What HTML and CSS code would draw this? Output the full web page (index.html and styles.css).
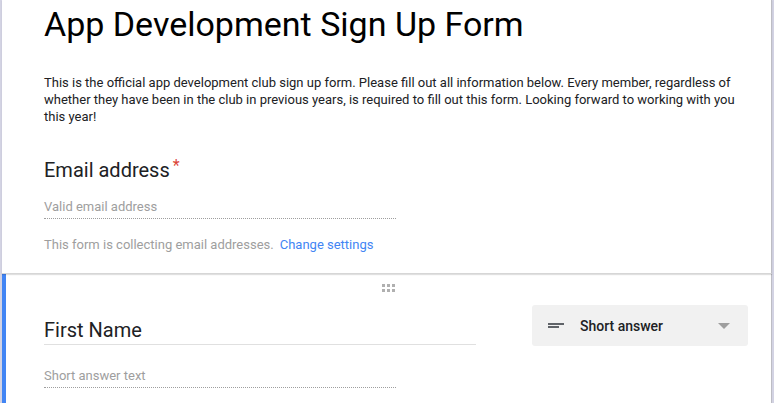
FILE: index.html
```html
<!DOCTYPE html>
<html>
<head>
<meta charset="utf-8">
<link rel="stylesheet" href="styles.css">
</head>
<body>
<div class="page">
  <section class="card header-card">
    <h1 class="title">App Development Sign Up Form</h1>
    <p class="desc">This is the official app development club sign up form. Please fill out all information below. Every member, regardless of whether they have been in the club in previous years, is required to fill out this form. Looking forward to working with you this year!</p>
    <div class="q-title">Email address<span class="req">*</span></div>
    <div class="field dotted">Valid email address</div>
    <div class="note">This form is collecting email addresses.<a class="link">Change settings</a></div>
  </section>
  <section class="card q-card">
    <div class="handle">
      <svg width="14" height="8" viewBox="0 0 14 8"><g fill="#b0b0b0"><rect x="0" y="0" width="3" height="3"/><rect x="5" y="0" width="3" height="3"/><rect x="10" y="0" width="3" height="3"/><rect x="0" y="5" width="3" height="3"/><rect x="5" y="5" width="3" height="3"/><rect x="10" y="5" width="3" height="3"/></g></svg>
    </div>
    <div class="q-row">
      <div class="q-main">
        <div class="q-name">First Name</div>
      </div>
      <div class="type-select">
        <svg class="type-icon" width="16" height="5" viewBox="0 0 16 5"><rect x="0" y="0" width="16" height="2" fill="#5f6368"/><rect x="0" y="3" width="11" height="2" fill="#5f6368"/></svg>
        <span class="type-label">Short answer</span>
        <svg class="caret" width="12" height="6" viewBox="0 0 12 6"><path d="M0 0h12L6 6z" fill="#9e9e9e"/></svg>
      </div>
    </div>
    <div class="field dotted short">Short answer text</div>
  </section>
</div>
</body>
</html>
```
FILE: styles.css
```css
* { box-sizing: border-box; }
html, body { margin: 0; padding: 0; }
body {
  background: #d3d3e3;
  font-family: Roboto, "Noto Sans", sans-serif;
  color: #202124;
  width: 774px;
  height: 403px;
  overflow: hidden;
}
.page {
  display: flex;
  flex-direction: column;
  padding-left: 2px;
  padding-right: 2px;
}
.card {
  background: #fff;
  border-right: 1px solid #bdbdc4;
}
.header-card {
  height: 274px;
  padding: 0 0 0 42px;
  border-bottom: 1px solid #d6d6d6;
  box-shadow: 0 1px 1px rgba(0,0,0,0.12);
  position: relative;
  z-index: 1;
}
.title {
  margin: 0;
  padding-top: 2px;
  font-weight: 400;
  font-size: 34px;
  line-height: 44px;
  color: #000;
}
.desc {
  margin: 28px 0 0;
  font-size: 13px;
  line-height: 17px;
  color: #202124;
  width: 700px;
}
.q-title {
  margin-top: 32px;
  font-size: 20px;
  line-height: 26px;
  color: #202124;
}
.req {
  color: #db4437;
  font-size: 16px;
  vertical-align: top;
  margin-left: 3px;
  position: relative;
  top: -4px;
}
.field {
  font-size: 13px;
  color: #9e9e9e;
  width: 352px;
  line-height: 16px;
  padding-bottom: 3px;
}
.dotted { border-bottom: 1px dotted #9e9e9e; }
.header-card .field { margin-top: 16px; }
.note {
  margin-top: 18px;
  font-size: 13px;
  line-height: 16px;
  color: #9e9e9e;
}
.link { color: #4285f4; margin-left: 6px; }
.q-card {
  border-left: 4px solid #4285f4;
  padding: 0 0 0 38px;
  height: 140px;
}
.handle {
  display: flex;
  justify-content: center;
  padding-top: 10px;
  height: 18px;
  margin-left: -38px;
}
.q-row {
  display: flex;
  align-items: flex-start;
  margin-top: 13px;
}
.q-main {
  width: 432px;
  padding-top: 12px;
}
.q-name {
  font-size: 20px;
  line-height: 26px;
  color: #202124;
  padding-bottom: 1px;
  border-bottom: 1px solid #e0e0e0;
}
.type-select {
  margin-left: 56px;
  width: 216px;
  height: 41px;
  background: #f1f1f1;
  border-radius: 3px;
  display: flex;
  align-items: center;
  padding: 0 18px 0 16px;
}
.type-icon { flex: none; }
.type-label {
  margin-left: 16px;
  font-size: 14px;
  font-weight: 500;
  color: #202124;
  flex: 1;
}
.caret { flex: none; }
.q-card .field { margin-top: 22px; }
```
